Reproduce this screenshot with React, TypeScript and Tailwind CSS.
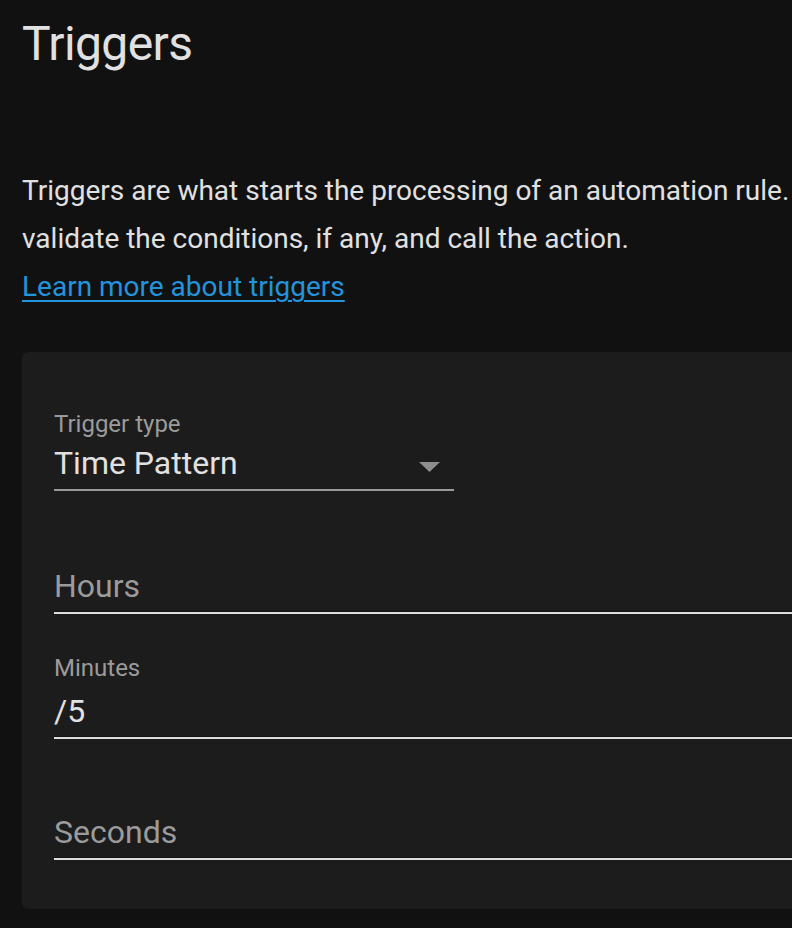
import React from "react";

function TextField({ label, value, className }: { label: string; value?: string; className?: string }) {
  return (
    <div className={className}>
      {value ? (
        <>
          <div className="text-[24px] leading-[32px] text-[#9b9b9b]">{label}</div>
          <div className="mt-[7px] text-[32px] leading-[40px] text-[#e1e1e1]">{value}</div>
        </>
      ) : (
        <div className="text-[32px] leading-[40px] text-[#9b9b9b]">{label}</div>
      )}
      <div className="mt-[5px] h-[1px] w-full bg-[#141414]" />
      <div className="h-[2px] w-full bg-[#dedede]" />
    </div>
  );
}

export default function App() {
  return (
    <div className="w-[792px] h-[928px] overflow-hidden bg-[#111111] font-['Roboto',sans-serif]">
      <div className="w-[770px] ml-[22px]">
        <h1 className="pt-[16px] text-[48px] leading-[56px] tracking-[-0.6px] text-[#e1e1e1] font-normal">Triggers</h1>
        <div className="mt-[95px] text-[28px] leading-[48px] text-[#e1e1e1]">
          <div className="whitespace-nowrap">Triggers are what starts the processing of an automation rule.</div>
          <div className="whitespace-nowrap">validate the conditions, if any, and call the action.</div>
          <div>
            <a className="text-[#2393dc] underline underline-offset-[4px] decoration-[2px]" href="#">
              Learn more about triggers
            </a>
          </div>
        </div>
        <div className="mt-[41px] rounded-l-[6px] bg-[#1c1c1c] pl-[32px] pt-[56px] pb-[49px]">
          <div className="w-[400px]">
            <div className="text-[24px] leading-[32px] text-[#9b9b9b]">Trigger type</div>
            <div className="mt-[3px] flex items-start justify-between">
              <div className="text-[32px] leading-[40px] text-[#e1e1e1]">Time Pattern</div>
              <svg className="mt-[19px] mr-[14px]" width="21" height="10" viewBox="0 0 21 10">
                <path d="M0 0 L21 0 L10.5 10 Z" fill="#8e8e8e" />
              </svg>
            </div>
            <div className="mt-[6px] h-[2px] w-full bg-[#9a9a9a]" />
          </div>
          <TextField className="mt-[75px]" label="Hours" />
          <TextField className="mt-[38px]" label="Minutes" value="/5" />
          <TextField className="mt-[73px]" label="Seconds" />
        </div>
      </div>
    </div>
  );
}
